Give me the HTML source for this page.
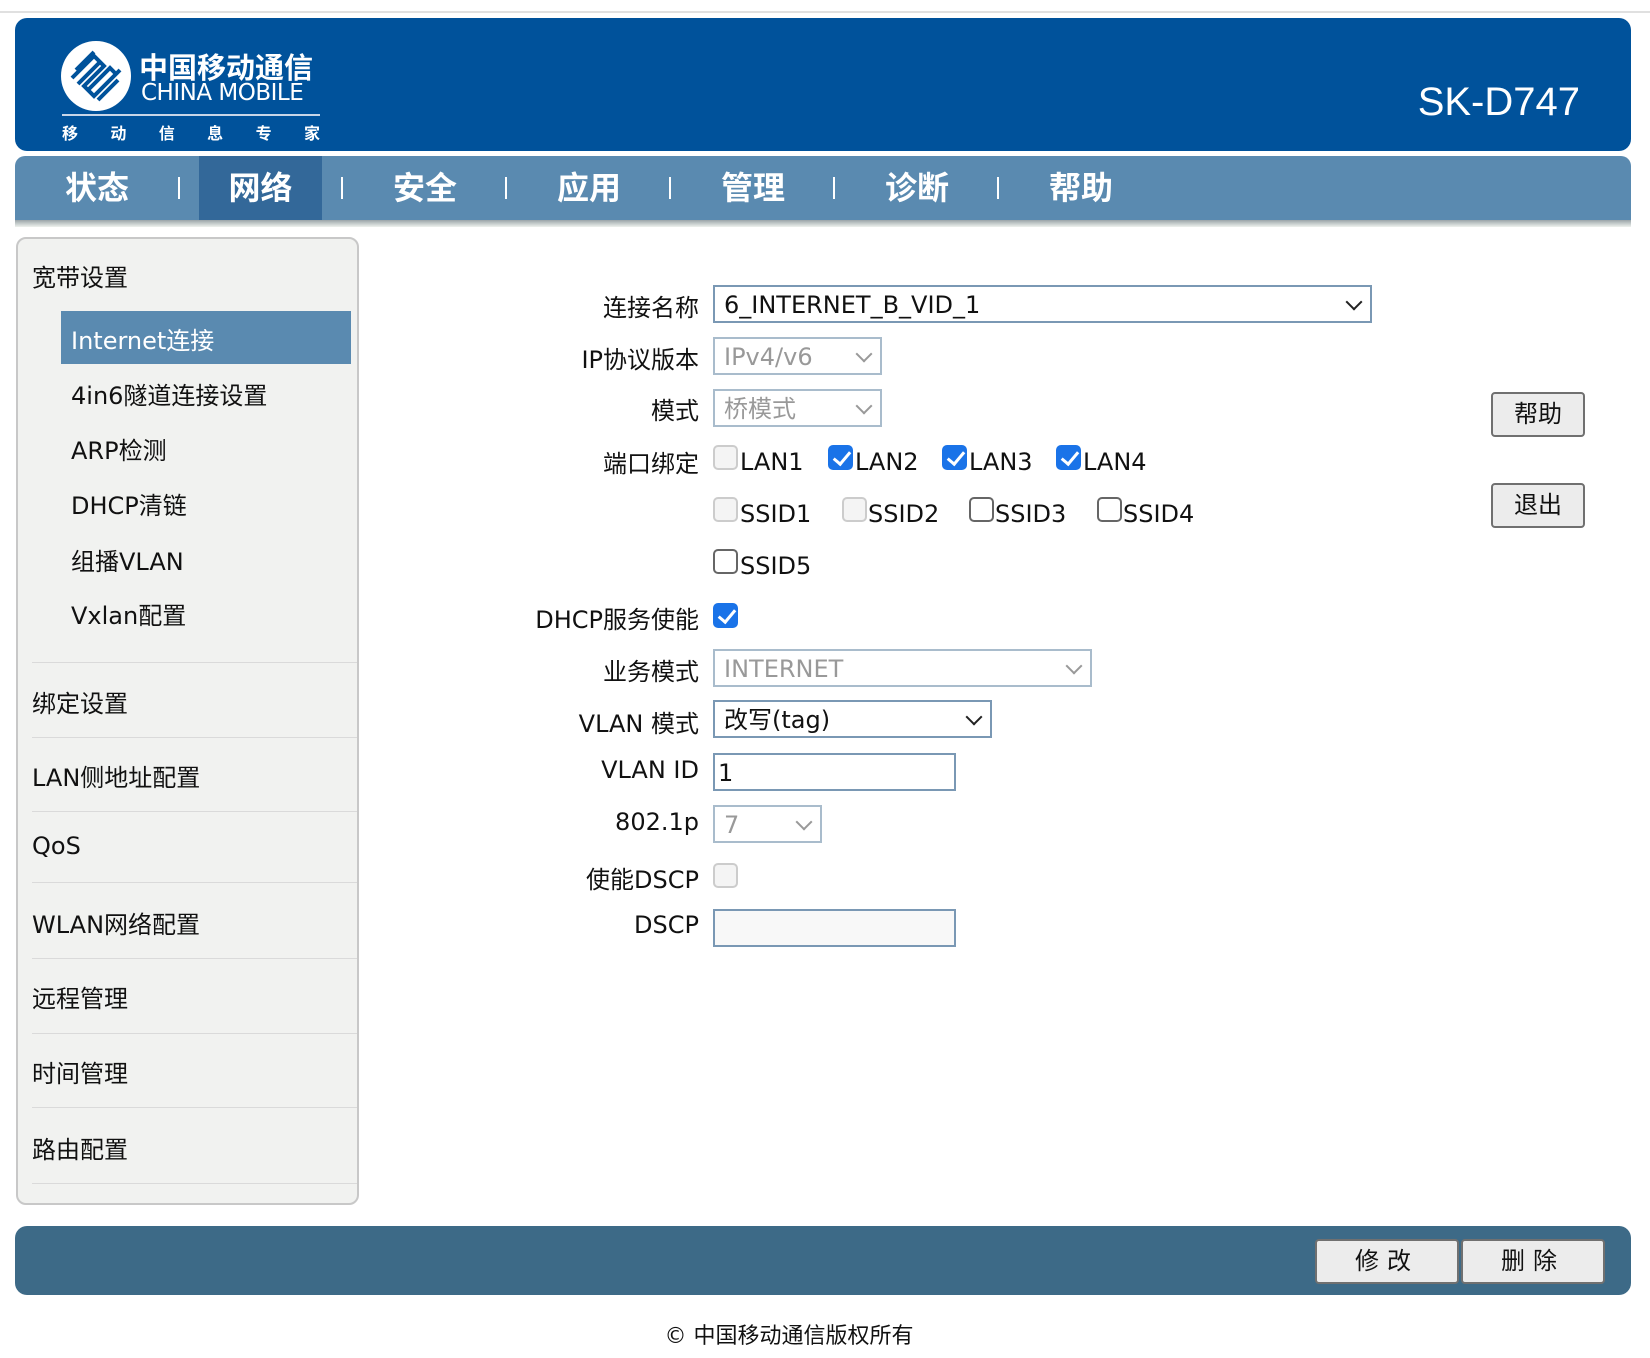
<!DOCTYPE html>
<html><head><meta charset="utf-8"><style>
*{margin:0;padding:0;box-sizing:border-box}
body{width:1650px;height:1358px;background:#fff;position:relative;font-family:"DejaVu Sans","Noto Sans CJK SC",sans-serif;overflow:hidden;color:#111}
.a{position:absolute}
.topline{left:0;top:11px;width:1650px;height:2px;background:#e0e0e0}
.hdr{left:15px;top:18px;width:1616px;height:133px;background:#00529b;border-radius:12px}
.nav{left:15px;top:156px;width:1616px;height:65px;background:#5a8ab0;border-radius:10px 10px 0 0}
.navsh{left:15px;top:220px;width:1616px;height:7px;background:linear-gradient(#9aa4a8,#eef2ee)}
.ni{top:156px;height:64px;line-height:64px;color:#fff;font-weight:bold;font-size:32px;text-align:center;font-family:"Liberation Sans","Noto Sans CJK SC",sans-serif}
.sep{top:177px;width:2px;height:22px;background:#fff}
.side{left:16px;top:237px;width:343px;height:968px;background:#f1f2f0;border:2px solid #c8c8c8;border-radius:10px}
.st{font-size:24px;left:32px}
.si{font-size:24px;left:71px}
.dv{left:32px;width:325px;height:1px;background:#dadada}
.lb{font-size:24px;right:951px;text-align:right;white-space:nowrap}
.sel{left:713px;height:38px;border:2px solid #8aa2b8;background:#fff;font-size:24px;padding-left:9px;line-height:36px}
.dis{color:#999;border-color:#a9bccc}
.chev{position:absolute;right:10px;top:9px;width:12px;height:12px;border-right:2px solid #222;border-bottom:2px solid #222;transform:rotate(45deg)}
.dis .chev{border-color:#999}
.cb{width:25px;height:25px;border:2px solid #666;border-radius:5px;background:#fff}
.cbd{border-color:#ccc;background:#f4f4f4}
.cbc{background:#1a73e8;border-color:#1a73e8}
.cbc::after{content:"";position:absolute;left:7px;top:1px;width:7px;height:14px;border-right:3px solid #fff;border-bottom:3px solid #fff;transform:rotate(40deg)}
.ct{font-size:24px}
.btn{border:2px solid #707070;border-radius:4px;background:#ececec;font-size:24px;text-align:center;font-family:"Liberation Sans","Noto Sans CJK SC",sans-serif}
</style></head><body>
<div class="a topline"></div>
<div class="a hdr"></div>
<svg class="a" style="left:58px;top:38px" width="80" height="80" viewBox="0 0 80 80">
<circle cx="38" cy="38" r="35" fill="#fff"/>
<g fill="none" stroke="#00529b" stroke-width="4">
<path d="M14 40 L36 18 L46 28 L26 48 L36 58 L62 32"/>
<path d="M20 46 L42 24 M30 52 L52 30 L58 36"/>
<path d="M18 32 L36 14 M40 62 L60 42"/>
</g></svg>
<div class="a" style="left:139px;top:45px;color:#fff;font-size:29px;font-weight:bold;font-family:'Noto Sans CJK SC',sans-serif">中国移动通信</div>
<div class="a" style="left:141px;top:80px;color:#fff;font-size:23px;letter-spacing:-0.5px;font-family:'DejaVu Sans',sans-serif">CHINA MOBILE</div>
<div class="a" style="left:62px;top:114px;width:258px;height:2px;background:#c8d6e8"></div>
<div class="a" style="left:62px;top:120px;width:258px;color:#fff;font-size:16px;font-weight:bold;display:flex;justify-content:space-between;font-family:'Noto Sans CJK SC',sans-serif"><span>移</span><span>动</span><span>信</span><span>息</span><span>专</span><span>家</span></div>
<div class="a" style="right:70px;top:80px;color:#fff;font-size:40px;font-family:'Liberation Sans',sans-serif">SK-D747</div>
<div class="a nav"></div>
<div class="a" style="left:199px;top:156px;width:123px;height:64px;background:#336899"></div>
<div class="a navsh"></div>
<div class="a ni" style="left:37px;width:120px">状态</div>
<div class="a ni" style="left:200px;width:121px">网络</div>
<div class="a ni" style="left:365px;width:120px">安全</div>
<div class="a ni" style="left:529px;width:120px">应用</div>
<div class="a ni" style="left:693px;width:120px">管理</div>
<div class="a ni" style="left:857px;width:120px">诊断</div>
<div class="a ni" style="left:1021px;width:120px">帮助</div>
<div class="a sep" style="left:178px"></div><div class="a sep" style="left:341px"></div><div class="a sep" style="left:505px"></div><div class="a sep" style="left:669px"></div><div class="a sep" style="left:833px"></div><div class="a sep" style="left:997px"></div>

<div class="a side"></div>
<div class="a st" style="top:258px">宽带设置</div>
<div class="a" style="left:61px;top:311px;width:290px;height:53px;background:#5a8ab0"></div>
<div class="a si" style="top:321px;color:#fff">Internet连接</div>
<div class="a si" style="top:376px">4in6隧道连接设置</div>
<div class="a si" style="top:431px">ARP检测</div>
<div class="a si" style="top:486px">DHCP清链</div>
<div class="a si" style="top:542px">组播VLAN</div>
<div class="a si" style="top:596px">Vxlan配置</div>
<div class="a dv" style="top:662px"></div>
<div class="a st" style="top:684px">绑定设置</div>
<div class="a dv" style="top:737px"></div>
<div class="a st" style="top:758px">LAN侧地址配置</div>
<div class="a dv" style="top:811px"></div>
<div class="a st" style="top:832px">QoS</div>
<div class="a dv" style="top:882px"></div>
<div class="a st" style="top:905px">WLAN网络配置</div>
<div class="a dv" style="top:958px"></div>
<div class="a st" style="top:979px">远程管理</div>
<div class="a dv" style="top:1033px"></div>
<div class="a st" style="top:1054px">时间管理</div>
<div class="a dv" style="top:1107px"></div>
<div class="a st" style="top:1130px">路由配置</div>
<div class="a dv" style="top:1183px"></div>

<div class="a lb" style="top:288px">连接名称</div>
<div class="a sel" style="top:285px;width:659px;border-color:#7a98b4;color:#111">6_INTERNET_B_VID_1<span class="chev"></span></div>
<div class="a lb" style="top:340px">IP协议版本</div>
<div class="a sel dis" style="top:337px;width:169px">IPv4/v6<span class="chev"></span></div>
<div class="a lb" style="top:391px">模式</div>
<div class="a sel dis" style="top:389px;width:169px">桥模式<span class="chev"></span></div>
<div class="a lb" style="top:444px">端口绑定</div>
<div class="a cb cbd" style="left:713px;top:445px"></div><div class="a ct" style="left:740px;top:448px">LAN1</div>
<div class="a cb cbc" style="left:828px;top:445px"></div><div class="a ct" style="left:855px;top:448px">LAN2</div>
<div class="a cb cbc" style="left:942px;top:445px"></div><div class="a ct" style="left:969px;top:448px">LAN3</div>
<div class="a cb cbc" style="left:1056px;top:445px"></div><div class="a ct" style="left:1083px;top:448px">LAN4</div>
<div class="a cb cbd" style="left:713px;top:497px"></div><div class="a ct" style="left:740px;top:500px">SSID1</div>
<div class="a cb cbd" style="left:842px;top:497px"></div><div class="a ct" style="left:868px;top:500px">SSID2</div>
<div class="a cb" style="left:969px;top:497px"></div><div class="a ct" style="left:995px;top:500px">SSID3</div>
<div class="a cb" style="left:1097px;top:497px"></div><div class="a ct" style="left:1123px;top:500px">SSID4</div>
<div class="a cb" style="left:713px;top:549px"></div><div class="a ct" style="left:740px;top:552px">SSID5</div>
<div class="a lb" style="top:600px">DHCP服务使能</div>
<div class="a cb cbc" style="left:713px;top:603px"></div>
<div class="a lb" style="top:652px">业务模式</div>
<div class="a sel dis" style="top:649px;width:379px">INTERNET<span class="chev"></span></div>
<div class="a lb" style="top:704px">VLAN 模式</div>
<div class="a sel" style="top:700px;width:279px;border-color:#7a98b4">改写(tag)<span class="chev"></span></div>
<div class="a lb" style="top:756px">VLAN ID</div>
<div class="a sel" style="top:753px;width:243px;border-color:#7a98b4;padding-left:3px">1</div>
<div class="a lb" style="top:808px">802.1p</div>
<div class="a sel dis" style="top:805px;width:109px">7<span class="chev"></span></div>
<div class="a lb" style="top:860px">使能DSCP</div>
<div class="a cb cbd" style="left:713px;top:863px"></div>
<div class="a lb" style="top:911px">DSCP</div>
<div class="a sel" style="top:909px;width:243px;border-color:#7a98b4;background:#f8f8f8"></div>

<div class="a btn" style="left:1491px;top:392px;width:94px;height:45px;line-height:41px">帮助</div>
<div class="a btn" style="left:1491px;top:483px;width:94px;height:45px;line-height:41px">退出</div>

<div class="a" style="left:15px;top:1226px;width:1616px;height:69px;background:#3d6a87;border-radius:12px"></div>
<div class="a btn" style="left:1315px;top:1239px;width:144px;height:45px;line-height:41px;letter-spacing:8px">修改</div>
<div class="a btn" style="left:1461px;top:1239px;width:144px;height:45px;line-height:41px;letter-spacing:8px">删除</div>
<div class="a" style="left:0;width:1578px;top:1318px;text-align:center;font-size:22px">© 中国移动通信版权所有</div>
</body></html>
